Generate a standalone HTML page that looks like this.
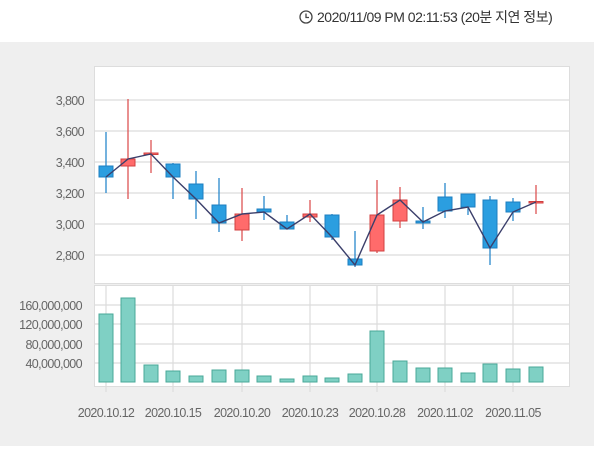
<!DOCTYPE html><html><head><meta charset="utf-8"><style>
html,body{margin:0;padding:0;background:#fff;width:600px;height:449px;overflow:hidden}
svg text{font-family:"Liberation Sans","Noto Sans CJK KR",sans-serif;fill:#666;font-size:12.5px;letter-spacing:-0.6px}
</style></head><body>
<svg width="600" height="449" xmlns="http://www.w3.org/2000/svg">
<rect x="0" y="0" width="600" height="449" fill="#fff"/>
<rect x="0" y="42" width="594" height="404" fill="#efefef"/>
<circle cx="306" cy="17" r="6" fill="none" stroke="#444" stroke-width="1.3"/>
<path d="M306 13.5V17.5H309" fill="none" stroke="#444" stroke-width="1.3"/>
<text x="317" y="22" style="fill:#333;font-size:14px;letter-spacing:-0.5px">2020/11/09 PM 02:11:53 (20분 지연 정보)</text>
<rect x="94.5" y="66.5" width="475" height="217" fill="#fff" stroke="#ddd"/>
<g stroke="#dcdcdc" stroke-width="1.2">
<line x1="95" x2="569" y1="100" y2="100"/><line x1="95" x2="569" y1="131" y2="131"/><line x1="95" x2="569" y1="162" y2="162"/><line x1="95" x2="569" y1="193" y2="193"/><line x1="95" x2="569" y1="224" y2="224"/><line x1="95" x2="569" y1="255" y2="255"/>
</g>
<g text-anchor="end">
<text x="84" y="105">3,800</text><text x="84" y="136">3,600</text><text x="84" y="167">3,400</text><text x="84" y="198">3,200</text><text x="84" y="229">3,000</text><text x="84" y="260">2,800</text>
</g>
<g stroke-width="1.3">
<line x1="106" x2="106" y1="132" y2="193" stroke="#2a88cc"/>
<line x1="128" x2="128" y1="99" y2="199" stroke="#d55"/>
<line x1="151" x2="151" y1="140" y2="173" stroke="#d55"/>
<line x1="173" x2="173" y1="163" y2="199" stroke="#2a88cc"/>
<line x1="196" x2="196" y1="171" y2="219" stroke="#2a88cc"/>
<line x1="219" x2="219" y1="178" y2="232" stroke="#2a88cc"/>
<line x1="242" x2="242" y1="188" y2="241" stroke="#d55"/>
<line x1="264" x2="264" y1="196" y2="220" stroke="#2a88cc"/>
<line x1="287" x2="287" y1="215" y2="229" stroke="#2a88cc"/>
<line x1="310" x2="310" y1="200" y2="222" stroke="#d55"/>
<line x1="332" x2="332" y1="214" y2="240" stroke="#2a88cc"/>
<line x1="355" x2="355" y1="231" y2="267" stroke="#2a88cc"/>
<line x1="377" x2="377" y1="180" y2="253" stroke="#d55"/>
<line x1="400" x2="400" y1="187" y2="228" stroke="#d55"/>
<line x1="423" x2="423" y1="207" y2="229" stroke="#2a88cc"/>
<line x1="445" x2="445" y1="183" y2="218" stroke="#2a88cc"/>
<line x1="468" x2="468" y1="194" y2="215" stroke="#2a88cc"/>
<line x1="490" x2="490" y1="196" y2="265" stroke="#2a88cc"/>
<line x1="513" x2="513" y1="198" y2="221" stroke="#2a88cc"/>
<line x1="536" x2="536" y1="185" y2="214" stroke="#d55"/>
</g>
<g fill="#2b9ee0" stroke="#1e7fc0" stroke-width="1">
<rect x="99" y="166" width="14" height="11"/>
<rect x="166" y="164" width="14" height="13"/>
<rect x="189" y="184" width="14" height="15"/>
<rect x="212" y="205" width="14" height="18"/>
<rect x="257" y="209" width="14" height="3"/>
<rect x="280" y="222" width="14" height="7"/>
<rect x="325" y="215" width="14" height="22"/>
<rect x="348" y="259" width="14" height="6"/>
<rect x="416" y="221" width="14" height="2"/>
<rect x="438" y="197" width="14" height="14"/>
<rect x="461" y="194" width="14" height="13"/>
<rect x="483" y="200" width="14" height="48"/>
<rect x="506" y="202" width="14" height="10"/>
</g>
<g fill="#ff6b6b" stroke="#d04040" stroke-width="1">
<rect x="121" y="159" width="14" height="7"/>
<rect x="144" y="153" width="14" height="1.5"/>
<rect x="235" y="214" width="14" height="16"/>
<rect x="303" y="214" width="14" height="3"/>
<rect x="370" y="215" width="14" height="36"/>
<rect x="393" y="200" width="14" height="21"/>
<rect x="529" y="201.5" width="14" height="1.5"/>
</g>
<polyline fill="none" stroke="#3b3f6b" stroke-width="1.4" points="106,177 128,159 151,154 173,177 196,199 219,223 242,214 264,212 287,229 310,214 332,237 355,265 377,215 400,200 423,222 445,211 468,207 490,248 513,212 536,202"/>
<rect x="94.5" y="285.5" width="475" height="101" fill="#fff" stroke="#ddd"/>
<g stroke="#dcdcdc" stroke-width="1.2">
<line x1="95" x2="569" y1="305" y2="305"/><line x1="95" x2="569" y1="324" y2="324"/><line x1="95" x2="569" y1="344" y2="344"/><line x1="95" x2="569" y1="363" y2="363"/>
<line x1="106" x2="106" y1="286" y2="392"/><line x1="173" x2="173" y1="286" y2="392"/><line x1="242" x2="242" y1="286" y2="392"/><line x1="310" x2="310" y1="286" y2="392"/><line x1="377" x2="377" y1="286" y2="392"/><line x1="445" x2="445" y1="286" y2="392"/><line x1="513" x2="513" y1="286" y2="392"/>
</g>
<g text-anchor="end">
<text x="82" y="310">160,000,000</text><text x="82" y="329">120,000,000</text><text x="82" y="349">80,000,000</text><text x="82" y="368">40,000,000</text>
</g>
<g fill="#7fd0c4" stroke="#4aa898" stroke-width="1">
<rect x="99" y="314" width="14" height="68"/>
<rect x="121" y="298" width="14" height="84"/>
<rect x="144" y="365" width="14" height="17"/>
<rect x="166" y="371" width="14" height="11"/>
<rect x="189" y="376" width="14" height="6"/>
<rect x="212" y="370" width="14" height="12"/>
<rect x="235" y="370" width="14" height="12"/>
<rect x="257" y="376" width="14" height="6"/>
<rect x="280" y="379" width="14" height="3"/>
<rect x="303" y="376" width="14" height="6"/>
<rect x="325" y="378" width="14" height="4"/>
<rect x="348" y="374" width="14" height="8"/>
<rect x="370" y="331" width="14" height="51"/>
<rect x="393" y="361" width="14" height="21"/>
<rect x="416" y="368" width="14" height="14"/>
<rect x="438" y="368" width="14" height="14"/>
<rect x="461" y="373" width="14" height="9"/>
<rect x="483" y="364" width="14" height="18"/>
<rect x="506" y="369" width="14" height="13"/>
<rect x="529" y="367" width="14" height="15"/>
</g>
<g text-anchor="middle">
<text x="106" y="417">2020.10.12</text><text x="173" y="417">2020.10.15</text><text x="242" y="417">2020.10.20</text><text x="310" y="417">2020.10.23</text><text x="377" y="417">2020.10.28</text><text x="445" y="417">2020.11.02</text><text x="513" y="417">2020.11.05</text>
</g>
</svg>
</body></html>
